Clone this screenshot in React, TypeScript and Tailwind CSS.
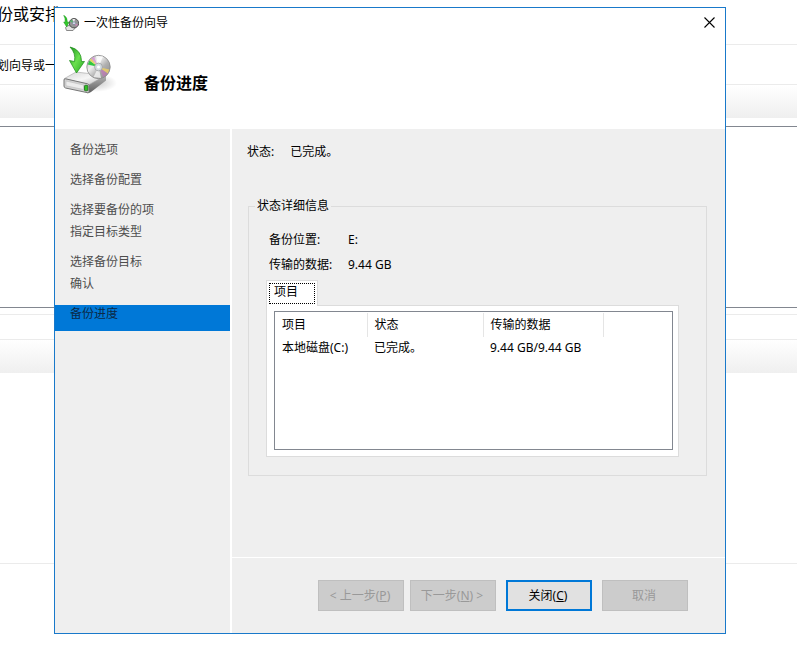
import type { ReactNode } from 'react'

const steps = [
  { label: '备份选项', gap: 'h-[30px]' },
  { label: '选择备份配置', gap: 'h-[30px]' },
  { label: '选择要备份的项', gap: 'h-[22px]' },
  { label: '指定目标类型', gap: 'h-[30px]' },
  { label: '选择备份目标', gap: 'h-[22px]' },
  { label: '确认', gap: 'h-[30px]' },
]

const rows = [{ item: '本地磁盘(C:)', status: '已完成。', data: '9.44 GB/9.44 GB' }]

function BackupIcon({ className }: { className: string }) {
  return (
    <svg viewBox="0 0 54 50" className={className} aria-hidden="true">
      <defs>
        <linearGradient id="disc" x1="0" y1="0" x2="1" y2="1">
          <stop offset="0" stopColor="#a9a9a9" />
          <stop offset="0.35" stopColor="#f0f0f0" />
          <stop offset="0.6" stopColor="#b0b0b0" />
          <stop offset="1" stopColor="#858585" />
        </linearGradient>
        <linearGradient id="top" x1="0" y1="0" x2="1" y2="1">
          <stop offset="0" stopColor="#d6d6d6" />
          <stop offset="0.5" stopColor="#f6f6f6" />
          <stop offset="1" stopColor="#b8b8b8" />
        </linearGradient>
        <linearGradient id="side" x1="0" y1="0" x2="0" y2="1">
          <stop offset="0" stopColor="#b4b4b4" />
          <stop offset="1" stopColor="#5e5e5e" />
        </linearGradient>
        <linearGradient id="arrow" x1="0" y1="0" x2="1" y2="1">
          <stop offset="0" stopColor="#1a931a" />
          <stop offset="0.5" stopColor="#6be04f" />
          <stop offset="1" stopColor="#26a822" />
        </linearGradient>
        <radialGradient id="shade">
          <stop offset="0" stopColor="#000" stopOpacity="0.2" />
          <stop offset="1" stopColor="#000" stopOpacity="0" />
        </radialGradient>
      </defs>
      <ellipse cx="34" cy="37" rx="20" ry="9" fill="url(#shade)" />
      <path d="M24 38 L43 29.500 L43 34.500 L28 46 Q26 47.500 24 47 Z" fill="url(#side)" />
      <path d="M1.500 32.500 L13 26 L42.500 29.500 L25.500 39 Z" fill="url(#top)" stroke="#a5a5a5" strokeWidth="0.600" />
      <path d="M1 34 Q1 32.500 2.500 32.800 L24.500 37.800 Q26 38.200 26 39.500 L26 45.500 Q26 47 24.500 46.700 L2.500 42 Q1 41.500 1 40 Z" fill="#d2d2d2" stroke="#777" strokeWidth="1" />
      <path d="M3 35 L20.500 39 L20.500 43.500 L3 39.800 Z" fill="#ececec" stroke="#bcbcbc" strokeWidth="0.600" />
      <rect x="21.500" y="39.300" width="3.300" height="5.500" rx="0.800" fill="#2fc324" stroke="#1e6418" strokeWidth="0.800" />
      <circle cx="35.500" cy="21" r="11.700" fill="url(#disc)" stroke="#8a8a8a" strokeWidth="0.800" />
      <path d="M35.500 21 L24.700 18.500 L26.500 14.500 Z" fill="#2fc840" />
      <path d="M35.500 21 L26.500 14.500 L28.300 12.500 Z" fill="#e2d34a" opacity="0.800" />
      <path d="M35.500 21 L28.300 12.500 L31 10.700 Z" fill="#d489d2" opacity="0.700" />
      <path d="M35.500 21 L46.300 23.500 L44.700 27.500 Z" fill="#e6cb6c" opacity="0.900" />
      <path d="M35.500 21 L44.700 27.500 L40.500 31.200 Z" fill="#c274b9" opacity="0.650" />
      <path d="M35.500 21 L33 10 L40 10.500 Z" fill="#fff" opacity="0.800" />
      <path d="M35.500 21 L30.500 31 L38 32 Z" fill="#fff" opacity="0.700" />
      <circle cx="35.500" cy="21" r="3.900" fill="#d3dbe0" stroke="#999" strokeWidth="0.700" />
      <circle cx="35.500" cy="21" r="1.500" fill="#fff" />
      <path d="M7 1 Q18.500 3.500 18.500 15.500 L21.500 15.500 L13.500 27 L6.500 14.500 L11.500 15.500 Q13 7 7 1 Z" fill="url(#arrow)" stroke="#1c8b1a" strokeWidth="0.700" />
    </svg>
  )
}

function SmallBackupIcon() {
  return (
    <svg viewBox="0 0 16 16" className="h-4 w-4" aria-hidden="true">
      <path d="M2.500 12.500 L5 10.500 L13 12 L10 15.500 L3.500 15.500 Z" fill="#e4e4e4" stroke="#7d7d7d" strokeWidth="0.900" />
      <circle cx="11" cy="8.200" r="4.700" fill="#969696" stroke="#555" strokeWidth="1" />
      <path d="M11 8.200 L7 6.500 L8.500 4.500 Z" fill="#55b46b" />
      <path d="M11 8.200 L9.500 4 L12 4 Z" fill="#eee" />
      <path d="M11 8.200 L15 9.500 L13.500 11.500 Z" fill="#c58bb4" />
      <circle cx="11" cy="8.200" r="1.400" fill="#dfe7f5" stroke="#6d7690" strokeWidth="0.600" />
      <path d="M0.700 0.300 Q4.500 2 4.300 7 L6 7.200 L3.700 12 L0.700 7 L2.200 7 Q2.500 3 0.700 0.300 Z" fill="#32c82c" stroke="#1b951a" strokeWidth="0.500" />
    </svg>
  )
}

function Backdrop() {
  return (
    <div className="min-h-[668px] overflow-hidden whitespace-nowrap text-black">
      <div className="-ml-[3px] h-[44px] pt-[2px] text-[16px] leading-6">份或安排</div>
      <div className="h-[40px] border-t border-[#ebebeb] pt-[13px] text-[12px] leading-4">
        <p className="-ml-[3px]">划向导或一</p>
      </div>
      <div className="h-[34px] border-t border-[#ebebeb] bg-linear-to-b from-white to-[#efefef]" />
      <div className="mt-2 h-[182px] border-y border-[#828790]" />
      <div className="mt-[6px] h-[25px] border-t border-[#ebebeb]" />
      <div className="h-[34px] border-t border-[#ebebeb] bg-linear-to-b from-white to-[#efefef]" />
      <div className="h-[191px] border-b border-[#ebebeb]" />
    </div>
  )
}

function WizardButton({ children, disabled }: { children: ReactNode; disabled?: boolean }) {
  return (
    <button
      type="button"
      disabled={disabled}
      className="h-[31px] w-[86px] border-2 border-[#0078d7] bg-[#e1e1e1] pr-[2px] whitespace-pre disabled:border disabled:border-[#bfbfbf] disabled:bg-[#cccccc] disabled:text-[#999999]"
    >
      {children}
    </button>
  )
}

export default function App() {
  return (
    <div className="relative bg-white font-['Noto_Sans','Noto_Sans_CJK_SC',sans-serif]">
      <Backdrop />
      <div
        role="dialog"
        aria-labelledby="wizard-title"
        className="absolute top-[7px] right-[71px] left-[54px] flex flex-col border border-[#1979ca] bg-white text-[12px] leading-4 text-black"
      >
        <header className="h-[121px]">
          <div className="flex h-[30px] items-center pr-2 pl-2">
            <SmallBackupIcon />
            <span id="wizard-title" className="ml-[5px] grow">一次性备份向导</span>
            <button type="button" aria-label="关闭窗口" className="p-[2px] pb-1">
              <svg viewBox="0 0 11 11" className="h-[11px] w-[11px]" aria-hidden="true">
                <path d="M0.500 0.500 L10.500 10.500 M10.500 0.500 L0.500 10.500" stroke="#000" strokeWidth="1.100" />
              </svg>
            </button>
          </div>
          <div className="flex items-start pl-2">
            <BackupIcon className="mt-2 h-[50px] w-[54px]" />
            <h1 className="mt-[33px] ml-[27px] text-[16px] leading-6 font-bold">备份进度</h1>
          </div>
        </header>

        <div className="flex bg-[#efefef]">
          <nav className="w-[177px] shrink-0 border-r-2 border-white pt-3">
            <ol className="leading-[18px]">
              {steps.map(step => (
                <li key={step.label} className={`${step.gap} pl-[15px] text-[#4d4d4d]`}>{step.label}</li>
              ))}
              <li aria-current="step" className="h-[26px] bg-[#0078d7] pl-[15px] text-[#0b2a47]">备份进度</li>
            </ol>
          </nav>

          <div className="min-w-0 grow">
            <main className="h-[428px] pt-[15px] pr-[18px] pl-[15px]">
              <p className="flex gap-4">
                <span>状态:</span>
                <span>已完成。</span>
              </p>

              <fieldset className="mt-[38px] ml-px h-[278px] min-w-0 border border-[#dcdcdc] pr-[27px] pl-[17px]">
                <legend className="-ml-[11px] px-[2px]">状态详细信息</legend>
                <dl className="mt-[18px] ml-[3px] grid grid-cols-[79px_1fr] gap-y-[9px]">
                  <dt>备份位置:</dt>
                  <dd>E:</dd>
                  <dt>传输的数据:</dt>
                  <dd>9.44 GB</dd>
                </dl>

                <div role="tablist" className="mt-[7px] flex">
                  <button
                    type="button"
                    role="tab"
                    aria-selected="true"
                    className="z-10 -mb-px h-[26px] w-[52px] border border-b-0 border-[#dcdcdc] bg-white p-[2px]"
                  >
                    <span className="flex h-[21px] items-start border border-dotted border-black pl-1">项目</span>
                  </button>
                </div>
                <div role="tabpanel" className="h-[152px] border border-[#dcdcdc] bg-white pt-[5px] pr-[5px] pl-[7px]">
                  <div className="h-[139px] border border-[#828790] pt-px">
                    <table className="w-full table-fixed text-left">
                      <colgroup>
                        <col className="w-[92px]" />
                        <col className="w-[116px]" />
                        <col className="w-[120px]" />
                        <col />
                      </colgroup>
                      <thead>
                        <tr className="h-6">
                          <th className="border-r border-[#e5e5e5] pl-[7px] font-normal">项目</th>
                          <th className="border-r border-[#e5e5e5] pl-[7px] font-normal">状态</th>
                          <th className="border-r border-[#e5e5e5] pl-[7px] font-normal">传输的数据</th>
                          <td />
                        </tr>
                      </thead>
                      <tbody>
                        {rows.map(row => (
                          <tr key={row.item} className="h-[22px] whitespace-nowrap">
                            <td className="pl-[7px]">{row.item}</td>
                            <td className="pl-[7px]">{row.status}</td>
                            <td className="pl-[7px]">{row.data}</td>
                            <td />
                          </tr>
                        ))}
                      </tbody>
                    </table>
                  </div>
                </div>
              </fieldset>
            </main>

            <footer className="flex h-[76px] items-start justify-end border-t border-white pt-[22px] pr-[37px]">
              <div className="flex gap-[6px]">
                <WizardButton disabled>{'< 上一步('}<u>P</u>)</WizardButton>
                <WizardButton disabled>下一步(<u>N</u>{') >'}</WizardButton>
              </div>
              <div className="ml-[10px] flex gap-[10px]">
                <WizardButton>关闭(<u>C</u>)</WizardButton>
                <WizardButton disabled>取消</WizardButton>
              </div>
            </footer>
          </div>
        </div>
      </div>
    </div>
  )
}
